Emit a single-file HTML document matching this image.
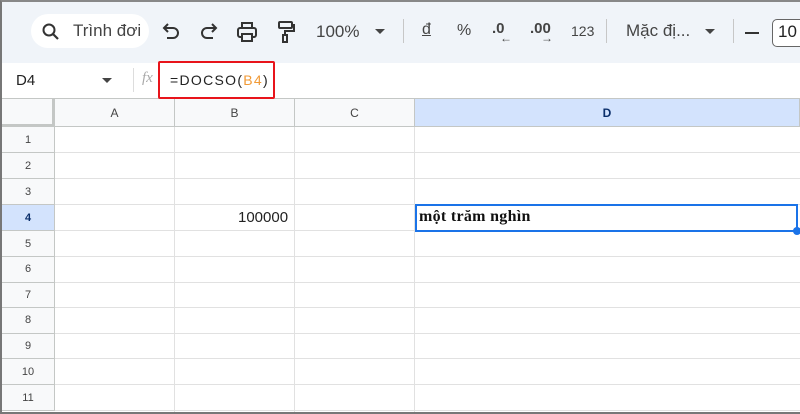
<!DOCTYPE html>
<html><head><meta charset="utf-8"><style>
*{margin:0;padding:0;box-sizing:border-box}
body{width:800px;height:414px;overflow:hidden;background:#fff;font-family:"Liberation Sans",Arial,sans-serif;position:relative}
.frame{position:absolute;left:0;top:0;width:800px;height:414px;border:2px solid #777;border-right:none;border-top:2px solid #888}
.tb{position:absolute;left:2px;top:2px;width:798px;height:61px;background:#f0f4f9}
.pill{position:absolute;left:31px;top:14px;width:118px;height:34px;background:#fff;border-radius:17px}
.t{position:absolute;color:#444;font-size:17px;white-space:nowrap}
.sep{position:absolute;top:19px;width:1px;height:24px;background:#c7c7c7}
.fb{position:absolute;left:2px;top:63px;width:798px;height:36px;background:#fff;border-bottom:1px solid #c4c7c5}
.hl{position:absolute;background:#e1e1e1}
.ch{position:absolute;top:99px;height:28px;background:#f8f9fa;border-right:1px solid #c4c7c5;border-bottom:1px solid #c4c7c5;font-size:12px;color:#444;text-align:center;line-height:28px}
.rh{position:absolute;left:2px;width:53px;background:#f8f9fa;border-right:1px solid #c4c7c5;border-bottom:1px solid #c4c7c5;font-size:11px;color:#444;text-align:center}
</style></head><body>
<div class="tb"></div>
<div class="pill"></div>
<svg style="position:absolute;left:41px;top:22px" width="20" height="20" viewBox="0 0 20 20"><circle cx="8" cy="8" r="5.5" fill="none" stroke="#333" stroke-width="2"/><path d="M12 12l5 5" stroke="#333" stroke-width="2.2"/></svg>
<div class="t" style="left:73px;top:21px">Trình đơi</div>
<svg style="position:absolute;left:160px;top:22px" width="22" height="20" viewBox="0 0 22 20"><path d="M5 6h8a5 5 0 0 1 0 10H7" fill="none" stroke="#333" stroke-width="2"/><path d="M8 2L4 6l4 4" fill="none" stroke="#333" stroke-width="2"/></svg>
<svg style="position:absolute;left:198px;top:22px" width="22" height="20" viewBox="0 0 22 20"><path d="M17 6H9a5 5 0 0 0 0 10h6" fill="none" stroke="#333" stroke-width="2"/><path d="M14 2l4 4-4 4" fill="none" stroke="#333" stroke-width="2"/></svg>
<svg style="position:absolute;left:236px;top:21px" width="22" height="22" viewBox="0 0 22 22"><rect x="6" y="2" width="10" height="5" fill="none" stroke="#333" stroke-width="2"/><rect x="2" y="7" width="18" height="9" rx="2" fill="none" stroke="#333" stroke-width="2"/><rect x="6" y="13" width="10" height="7" fill="#f0f4f9" stroke="#333" stroke-width="2"/></svg>
<svg style="position:absolute;left:276px;top:20px" width="20" height="24" viewBox="0 0 20 24"><rect x="3" y="2" width="13" height="6" rx="1" fill="none" stroke="#333" stroke-width="2"/><path d="M16 5h2v6H9v4" fill="none" stroke="#333" stroke-width="2"/><rect x="7" y="15" width="4" height="7" fill="none" stroke="#333" stroke-width="2"/></svg>
<div class="t" style="left:316px;top:22px">100%</div>
<svg style="position:absolute;left:374px;top:28px" width="12" height="8"><path d="M1 1h10L6 6z" fill="#444"/></svg>
<div class="sep" style="left:403px"></div>
<div class="t" style="left:422px;top:21px;font-size:16px;text-decoration:underline">đ</div>
<div class="t" style="left:457px;top:22px;font-size:16px">%</div>
<div class="t" style="left:492px;top:20px;font-size:15px;font-weight:bold">.0</div>
<div class="t" style="left:500px;top:31px;font-size:12px">←</div>
<div class="t" style="left:530px;top:20px;font-size:15px;font-weight:bold">.00</div>
<div class="t" style="left:541px;top:31px;font-size:12px">→</div>
<div class="t" style="left:571px;top:23px;font-size:14px">123</div>
<div class="sep" style="left:606px"></div>
<div class="t" style="left:626px;top:21px">Mặc đị...</div>
<svg style="position:absolute;left:704px;top:28px" width="12" height="8"><path d="M1 1h10L6 6z" fill="#444"/></svg>
<div class="sep" style="left:733px"></div>
<div style="position:absolute;left:745px;top:32px;width:14px;height:2px;background:#333"></div>
<div style="position:absolute;left:772px;top:19px;width:40px;height:28px;border:1.5px solid #666;border-radius:5px;background:#fff"></div>
<div class="t" style="left:778px;top:22px;color:#222">10</div>
<div class="fb"></div>
<div class="t" style="left:16px;top:72px;font-size:15px;color:#222">D4</div>
<svg style="position:absolute;left:102px;top:78px" width="10" height="6"><path d="M0 0h10L5 5z" fill="#444"/></svg>
<div style="position:absolute;left:133px;top:68px;width:1px;height:24px;background:#ddd"></div>
<div class="t" style="left:142px;top:70px;font-size:15px;font-style:italic;color:#aaa;font-family:'Liberation Serif',serif">fx</div>
<div style="position:absolute;left:158px;top:61px;width:117px;height:38px;border:2px solid #e8141b;border-radius:2px;background:#fff"></div>
<div class="t" style="left:170px;top:72px;font-size:14px;color:#222;letter-spacing:1.3px">=DOCSO(<span style="color:#f19a36">B4</span>)</div>
<div class="ch" style="left:2px;width:53px;background:#f8f9fa;border-right:3px solid #c4c7c5;border-bottom:3px solid #c4c7c5"></div>
<div class="ch" style="left:55px;width:120px">A</div>
<div class="ch" style="left:175px;width:120px">B</div>
<div class="ch" style="left:295px;width:120px">C</div>
<div class="ch" style="left:415px;width:385px;background:#d3e3fd;color:#0b2f6b;font-weight:bold">D</div>
<div id="rows"></div>
<script>
var tops=[127,153,179,205,231,257,282.7,308,333.7,359,385,411];
var h='';
for(var i=0;i<11;i++){var t=tops[i],hh=tops[i+1]-t;
h+='<div class="rh" style="top:'+t+'px;height:'+hh+'px;line-height:'+hh+'px;'+(i==3?'background:#d3e3fd;color:#0b2f6b;font-weight:bold':'')+'">'+(i+1)+'</div>';
h+='<div class="hl" style="left:55px;top:'+(t+hh-1)+'px;width:745px;height:1px"></div>';}
[175,295,415].forEach(function(x){h+='<div class="hl" style="left:'+(x-1)+'px;top:127px;width:1px;height:285px"></div>';});
document.getElementById('rows').innerHTML=h;
</script>
<div class="t" style="left:238px;top:209px;font-size:15px;color:#222">100000</div>
<div style="position:absolute;left:415px;top:204px;width:383px;height:28px;border:2px solid #1a73e8"></div>
<div class="t" style="left:419px;top:208px;font-size:16px;color:#111;font-weight:bold;font-family:'Liberation Serif',serif;letter-spacing:0.3px">một trăm nghìn</div>
<div style="position:absolute;left:793px;top:227px;width:8px;height:8px;border-radius:50%;background:#1a73e8"></div>
<div class="frame"></div>
</body></html>
